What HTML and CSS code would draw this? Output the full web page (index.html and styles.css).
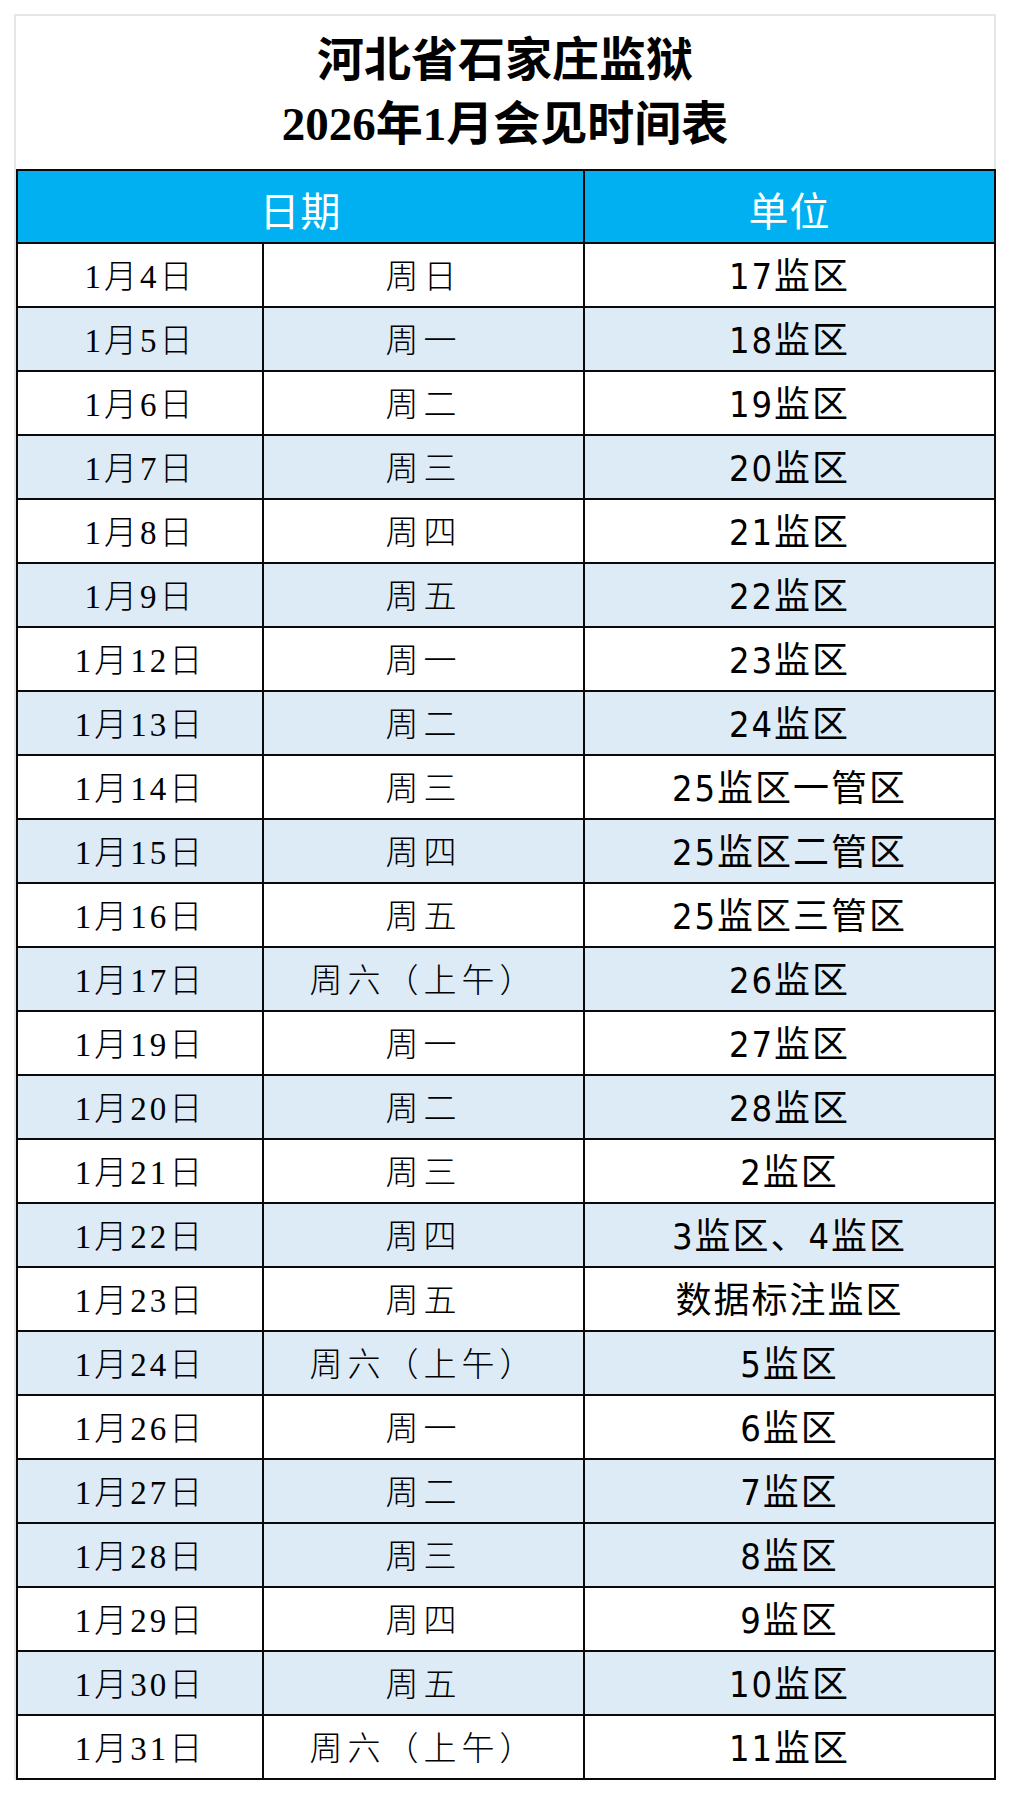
FILE: index.html
```html
<!DOCTYPE html>
<html lang="zh-CN">
<head>
<meta charset="utf-8">
<title>河北省石家庄监狱2026年1月会见时间表</title>
<link rel="stylesheet" href="styles.css">
</head>
<body>
<div class="sheet">
  <div class="title">
    <div class="title-line">河北省石家庄监狱</div>
    <div class="title-line">2026年1月会见时间表</div>
  </div>
  <table class="schedule">
    <colgroup>
      <col class="c-date"><col class="c-week"><col class="c-unit">
    </colgroup>
    <thead>
      <tr><th colspan="2">日期</th><th>单位</th></tr>
    </thead>
    <tbody>
      <tr><td class="d">1月4日</td><td class="w">周日</td><td class="u">17监区</td></tr>
      <tr class="alt"><td class="d">1月5日</td><td class="w">周一</td><td class="u">18监区</td></tr>
      <tr><td class="d">1月6日</td><td class="w">周二</td><td class="u">19监区</td></tr>
      <tr class="alt"><td class="d">1月7日</td><td class="w">周三</td><td class="u">20监区</td></tr>
      <tr><td class="d">1月8日</td><td class="w">周四</td><td class="u">21监区</td></tr>
      <tr class="alt"><td class="d">1月9日</td><td class="w">周五</td><td class="u">22监区</td></tr>
      <tr><td class="d">1月12日</td><td class="w">周一</td><td class="u">23监区</td></tr>
      <tr class="alt"><td class="d">1月13日</td><td class="w">周二</td><td class="u">24监区</td></tr>
      <tr><td class="d">1月14日</td><td class="w">周三</td><td class="u">25监区一管区</td></tr>
      <tr class="alt"><td class="d">1月15日</td><td class="w">周四</td><td class="u">25监区二管区</td></tr>
      <tr><td class="d">1月16日</td><td class="w">周五</td><td class="u">25监区三管区</td></tr>
      <tr class="alt"><td class="d">1月17日</td><td class="w">周六（上午）</td><td class="u">26监区</td></tr>
      <tr><td class="d">1月19日</td><td class="w">周一</td><td class="u">27监区</td></tr>
      <tr class="alt"><td class="d">1月20日</td><td class="w">周二</td><td class="u">28监区</td></tr>
      <tr><td class="d">1月21日</td><td class="w">周三</td><td class="u">2监区</td></tr>
      <tr class="alt"><td class="d">1月22日</td><td class="w">周四</td><td class="u">3监区、4监区</td></tr>
      <tr><td class="d">1月23日</td><td class="w">周五</td><td class="u">数据标注监区</td></tr>
      <tr class="alt"><td class="d">1月24日</td><td class="w">周六（上午）</td><td class="u">5监区</td></tr>
      <tr><td class="d">1月26日</td><td class="w">周一</td><td class="u">6监区</td></tr>
      <tr class="alt"><td class="d">1月27日</td><td class="w">周二</td><td class="u">7监区</td></tr>
      <tr class="alt"><td class="d">1月28日</td><td class="w">周三</td><td class="u">8监区</td></tr>
      <tr><td class="d">1月29日</td><td class="w">周四</td><td class="u">9监区</td></tr>
      <tr class="alt"><td class="d">1月30日</td><td class="w">周五</td><td class="u">10监区</td></tr>
      <tr><td class="d">1月31日</td><td class="w">周六（上午）</td><td class="u">11监区</td></tr>
    </tbody>
  </table>
</div>
</body>
</html>
```

FILE: styles.css
```css
html, body {
  margin: 0;
  padding: 0;
  background: #ffffff;
}

.sheet {
  margin: 14px 0 0 14px;
  width: 978px;
  border: 2px solid #e6e6e6;
  border-bottom: none;
  background: #ffffff;
}

.title {
  padding: 12px 0 13px;
  text-align: center;
  font-family: "Liberation Serif", "Noto Sans CJK SC", serif;
  font-weight: 700;
  font-size: 47px;
  line-height: 64px;
  color: #000000;
}

.schedule {
  width: 978px;
  border-collapse: collapse;
  table-layout: fixed;
}

.c-date { width: 246px; }
.c-week { width: 321px; }
.c-unit { width: 411px; }

.schedule th,
.schedule td {
  border: 2px solid #0a0a0a;
  padding: 0;
  text-align: center;
  vertical-align: middle;
  color: #000000;
}

.schedule th {
  height: 67px;
  background: #00b0f0;
  color: #ffffff;
  font-family: "Noto Sans CJK SC", sans-serif;
  font-weight: 400;
  font-size: 40px;
  line-height: 48px;
  letter-spacing: 1px;
  padding-top: 4px;
}

.schedule td {
  height: 58px;
  padding-top: 4px;
  line-height: 40px;
}

.schedule tbody tr.alt td {
  background: #ddebf7;
}

.d {
  font-family: "Liberation Serif", "Noto Sans CJK SC", serif;
  font-weight: 300;
  font-size: 33px;
  letter-spacing: 3px;
}

.w {
  font-family: "Liberation Serif", "Noto Sans CJK SC", serif;
  font-weight: 300;
  font-size: 33px;
  letter-spacing: 5px;
}

.u {
  font-family: "DejaVu Sans Condensed", "Noto Sans CJK SC", sans-serif;
  font-weight: 400;
  font-size: 36px;
  letter-spacing: 2px;
}
```
